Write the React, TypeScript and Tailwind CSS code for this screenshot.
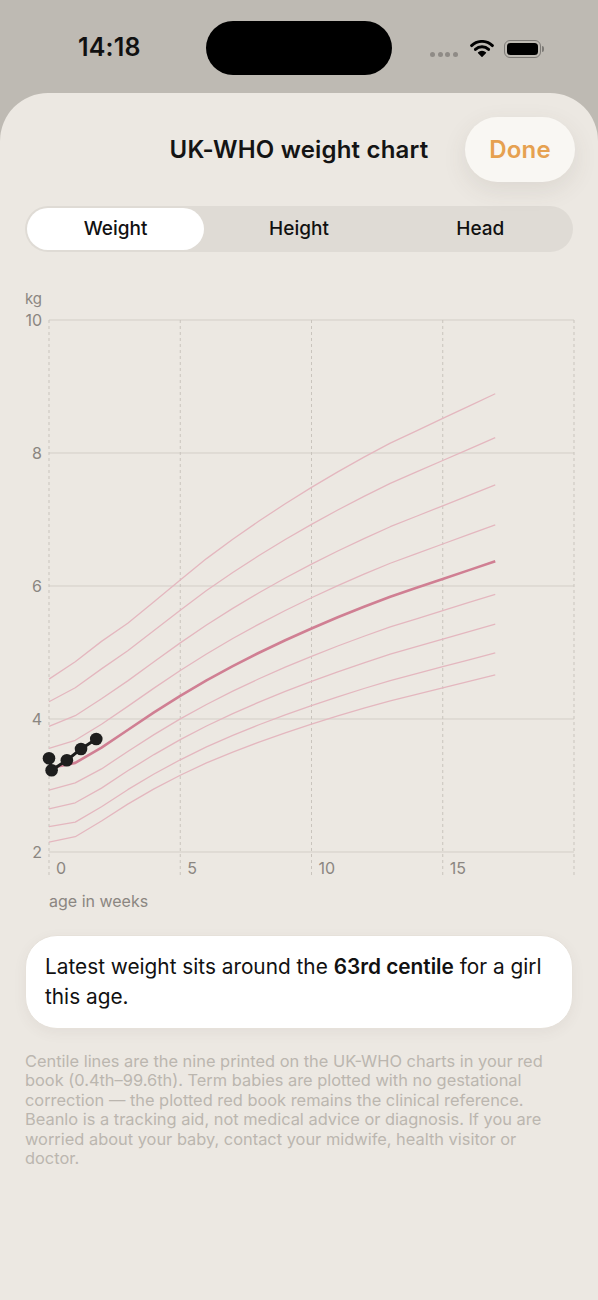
import React from "react";

const X0 = 49;
const PXW = 26.25;
const TOP = 40; // svg y for 10 kg
const PXKG = 66.5;
const xw = (w: number) => X0 + w * PXW;
const yk = (k: number) => TOP + (10 - k) * PXKG;

const M = [3.2322, 3.3388, 3.5693, 3.8352, 4.0987, 4.3476, 4.5793, 4.795, 4.9959, 5.1842, 5.3618, 5.5295, 5.6883, 5.8393, 5.973, 6.106, 6.239, 6.372];
const Z = [2.652, 2.054, 1.341, 0.674, 0, -0.674, -1.341, -2.054, -2.652];
const W0 = [4.6, 4.26, 3.89, 3.56, 3.26, 2.93, 2.65, 2.38, 2.15];
const W1 = [4.86, 4.47, 4.05, 3.68, 3.34, 3.04, 2.74, 2.45, 2.23];

function val(w: number, z: number) {
  const m = M[w];
  const L = -0.2 * Math.min(1, (w - 2) / 4);
  const S = 0.1215 + 0.018 * Math.exp(-(w - 2) / 1.5);
  if (Math.abs(L) < 1e-6) return m * Math.exp(S * z);
  return m * Math.pow(1 + L * S * z, 1 / L);
}

function curve(i: number) {
  const pts: [number, number][] = [
    [0, W0[i]],
    [1, W1[i]],
  ];
  for (let w = 2; w <= 17; w++) pts.push([w, val(w, Z[i])]);
  return pts.map(([w, k], j) => `${j === 0 ? "M" : "L"}${xw(w).toFixed(2)} ${yk(k).toFixed(2)}`).join(" ");
}

const data: [number, number][] = [
  [0, 3.41],
  [0.1, 3.23],
  [0.68, 3.38],
  [1.22, 3.55],
  [1.8, 3.7],
];

function Chart() {
  return (
    <svg width="598" height="640" viewBox="0 0 598 640" className="block">
      <text x="42" y="18" textAnchor="end" dominantBaseline="central" fontSize="15" fill="#8b8681" fontFamily="Inter, sans-serif">kg</text>
      {[10, 8, 6, 4, 2].map((k) => (
        <g key={k}>
          <line x1={X0} x2={574} y1={yk(k)} y2={yk(k)} stroke="#d3cec7" strokeWidth="1" />
          <text x="42" y={yk(k)} textAnchor="end" dominantBaseline="central" fontSize="16" fill="#8b8681" fontFamily="Inter, sans-serif">{k}</text>
        </g>
      ))}
      {[0, 5, 10, 15, 20].map((w) => (
        <g key={w}>
          <line x1={xw(w)} x2={xw(w)} y1={TOP} y2={597} stroke="#c9c4bd" strokeWidth="1" strokeDasharray="3 3" />
          {w < 20 && (
            <text x={xw(w) + 7} y={588} dominantBaseline="central" fontSize="16" fill="#8b8681" fontFamily="Inter, sans-serif">{w}</text>
          )}
        </g>
      ))}
      {Z.map((_, i) =>
        i === 4 ? null : <path key={i} d={curve(i)} fill="none" stroke="#e4b7bf" strokeWidth="1.3" strokeLinejoin="round" />
      )}
      <path d={curve(4)} fill="none" stroke="#d07f93" strokeWidth="2.6" strokeLinejoin="round" />
      <path
        d={data.map(([w, k], j) => `${j === 0 ? "M" : "L"}${xw(w)} ${yk(k)}`).join(" ")}
        fill="none"
        stroke="#1c1c1c"
        strokeWidth="3"
      />
      {data.map(([w, k], j) => (
        <circle key={j} cx={xw(w)} cy={yk(k)} r="6.3" fill="#1e1e1e" />
      ))}
      <text x="49" y="621" dominantBaseline="central" fontSize="16" fill="#8b8681" fontFamily="Inter, sans-serif">age in weeks</text>
    </svg>
  );
}

function Wifi() {
  return (
    <svg width="24" height="17" viewBox="0 0 24 17">
      <path d="M1.6 5.6 A15 15 0 0 1 22.4 5.6" fill="none" stroke="#000" strokeWidth="2.9" strokeLinecap="round" />
      <path d="M5.4 9.4 A9.6 9.6 0 0 1 18.6 9.4" fill="none" stroke="#000" strokeWidth="2.9" strokeLinecap="round" />
      <path d="M12 16.2 L8.6 12.8 A4.8 4.8 0 0 1 15.4 12.8 Z" fill="#000" stroke="#000" strokeWidth="1.4" strokeLinejoin="round" />
    </svg>
  );
}

function Battery() {
  return (
    <div className="flex items-center">
      <div className="w-[37px] h-[18px] rounded-[6px] border-[1.5px] border-[#7d7a76] p-[2px]">
        <div className="w-full h-full rounded-[3.5px] bg-black" />
      </div>
      <div className="w-[2px] h-[6px] rounded-r-[2px] bg-[#7d7a76] ml-[1px]" />
    </div>
  );
}

export default function App() {
  return (
    <div className="w-[598px] h-[1300px] bg-[#bebab3] overflow-hidden" style={{ fontFamily: "Inter, 'Noto Sans', sans-serif" }}>
      {/* status bar */}
      <div className="h-[93px] pt-[21px]">
        <div className="flex items-center h-[54px]">
          <div className="w-[206px] pl-[78px] text-[25px] font-semibold text-[#111] tracking-[0.2px]">14:18</div>
          <div className="w-[186px] h-[54px] rounded-full bg-black" />
          <div className="flex items-center pl-[38px]">
            <div className="flex gap-[2.5px] mt-[12px]">
              {[0, 1, 2, 3].map((i) => (
                <div key={i} className="w-[5px] h-[5px] rounded-full bg-[#8f8b86]" />
              ))}
            </div>
            <div className="ml-[12px] mt-[1px]">
              <Wifi />
            </div>
            <div className="ml-[10px] mt-[1px]">
              <Battery />
            </div>
          </div>
        </div>
      </div>

      {/* sheet */}
      <div className="h-[1207px] bg-[#ece8e2] rounded-t-[48px]">
        <div className="pt-[24px] grid grid-cols-[1fr_auto_1fr] items-center h-[89px]">
          <div />
          <div className="text-[24px] font-semibold text-[#141414] tracking-[0.2px]">UK-WHO weight chart</div>
          <div className="flex justify-end pr-[23px]">
            <div className="w-[110px] h-[65px] rounded-full bg-[#f9f7f3] shadow-[0_8px_24px_rgba(80,70,60,0.10)] flex items-center justify-center text-[24px] font-semibold text-[#e6a150] tracking-[0.2px]">
              Done
            </div>
          </div>
        </div>

        <div className="mt-[24px] mx-[25px] h-[46px] rounded-[23px] bg-[#dfdbd5] p-[2px] grid grid-cols-3">
          <div className="w-[177px] h-[42px] rounded-[21px] bg-white flex items-center justify-center text-[19px] font-medium text-[#111]">Weight</div>
          <div className="flex items-center justify-center text-[19px] font-medium text-[#111]">Height</div>
          <div className="flex items-center justify-center text-[19px] font-medium text-[#111]">Head</div>
        </div>

        <div className="mt-[28px]">
          <Chart />
        </div>

        <div className="mt-[15px] mx-[25px] rounded-[32px] bg-white border border-[#e6e1da] shadow-[0_4px_14px_rgba(80,70,60,0.06)] px-[19px] pt-[16px] pb-[16px] text-[20.8px] leading-[30px] text-[#111]">
          <span className="whitespace-nowrap">
            Latest weight sits around the <span className="font-semibold">63rd centile</span> for a girl
          </span>
          <br />
          this age.
        </div>

        <div className="mt-[23px] px-[25px] text-[16.4px] leading-[19.4px] text-[#bbb6af] whitespace-nowrap">
          Centile lines are the nine printed on the UK-WHO charts in your red
          <br />
          book (0.4th–99.6th). Term babies are plotted with no gestational
          <br />
          correction — the plotted red book remains the clinical reference.
          <br />
          Beanlo is a tracking aid, not medical advice or diagnosis. If you are
          <br />
          worried about your baby, contact your midwife, health visitor or
          <br />
          doctor.
        </div>
      </div>
    </div>
  );
}
